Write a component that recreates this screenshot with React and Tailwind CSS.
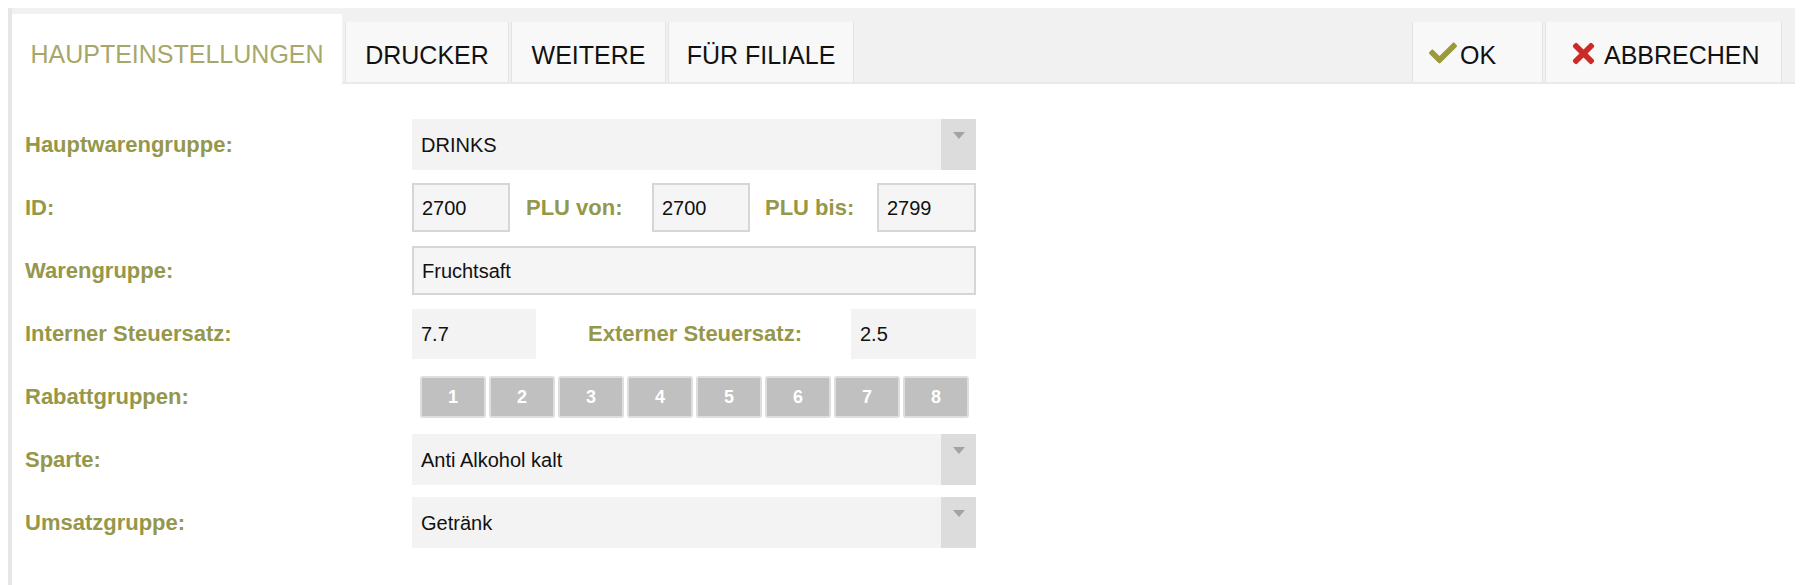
import React from "react";
import { FaCheck, FaTimes } from "react-icons/fa";

const label = "text-[22px] font-bold text-[#95974a] leading-none";
const val = "text-[20px] text-[#111] leading-none";

function Select({ value }) {
  return (
    <div className="flex h-[51px] w-[564px] bg-[#f3f3f3]">
      <div className={`flex flex-1 items-center pl-[9px] ${val}`}>{value}</div>
      <div className="flex w-[35px] justify-center bg-[#dcdcdc] pt-[13px]">
        <div className="h-0 w-0 border-x-[6px] border-t-[7px] border-x-transparent border-t-[#a3a3a3]" />
      </div>
    </div>
  );
}

function Box({ value, w }) {
  return (
    <div
      className={`flex h-[49px] items-center border-2 border-[#d6d6d6] bg-[#f5f5f5] pl-[8px] ${val}`}
      style={{ width: w }}
    >
      {value}
    </div>
  );
}

function Row({ name, children }) {
  return (
    <div className="flex h-[51px] items-center">
      <div className={`w-[387px] ${label}`}>{name}</div>
      {children}
    </div>
  );
}

const tab =
  "flex h-[60px] items-center border-x border-[#e3e3e3] bg-[#f8f8f8] pt-[6px] text-[25px] text-[#111] leading-none";

export default function App() {
  return (
    <div className="h-[585px] w-[1800px] overflow-hidden bg-white pl-[8px] pt-[8px] font-['Liberation_Sans',Arial,sans-serif]">
      <div className="h-full w-[1787px] border-l-4 border-[#e6e6e6]">
        {/* tab bar */}
        <div className="flex h-[76px] items-end border-b-2 border-[#e9e9e9] bg-[#f1f1f1]">
          <div className="-mb-[2px] flex h-[70px] w-[330px] items-center justify-center bg-white pt-[10px] text-[25px] text-[#a7a76a] leading-none">
            HAUPTEINSTELLUNGEN
          </div>
          <div className={`ml-[3px] w-[164px] justify-center ${tab}`}>DRUCKER</div>
          <div className={`ml-[2px] w-[155px] justify-center ${tab}`}>WEITERE</div>
          <div className={`ml-[2px] w-[186px] justify-center ${tab}`}>FÜR FILIALE</div>
          <div className="flex-1" />
          <div className={`w-[131px] gap-[3px] pl-[16px] ${tab}`}>
            <FaCheck className="-mt-[4px] text-[28px] text-[#9a9a3a]" />
            OK
          </div>
          <div className={`ml-[2px] w-[237px] gap-[5px] pl-[22px] ${tab}`}>
            <FaTimes className="-mt-[3px] text-[31px] text-[#cc2a26]" />
            ABBRECHEN
          </div>
          <div className="w-[13px]" />
        </div>

        {/* form */}
        <div className="flex flex-col gap-[12px] pl-[13px] pt-[35px]">
          <Row name="Hauptwarengruppe:">
            <Select value="DRINKS" />
          </Row>
          <Row name="ID:">
            <Box value="2700" w={98} />
            <div className={`w-[142px] pl-[16px] ${label}`}>PLU von:</div>
            <Box value="2700" w={98} />
            <div className={`w-[127px] pl-[15px] ${label}`}>PLU bis:</div>
            <Box value="2799" w={99} />
          </Row>
          <Row name="Warengruppe:">
            <Box value="Fruchtsaft" w={564} />
          </Row>
          <Row name="Interner Steuersatz:">
            <div className={`flex h-[50px] w-[124px] items-center bg-[#f3f3f3] pl-[9px] ${val}`}>7.7</div>
            <div className={`w-[315px] pl-[52px] ${label}`}>Externer Steuersatz:</div>
            <div className={`flex h-[50px] w-[125px] items-center bg-[#f3f3f3] pl-[9px] ${val}`}>2.5</div>
          </Row>
          <Row name="Rabattgruppen:">
            <div className="ml-[8px] flex gap-[3px]">
              {["1", "2", "3", "4", "5", "6", "7", "8"].map((n) => (
                <div
                  key={n}
                  className="flex h-[42px] w-[66px] items-center justify-center rounded-[3px] border-2 border-[#dedede] bg-[#c0c0c0] text-[18px] font-bold text-white leading-none"
                >
                  {n}
                </div>
              ))}
            </div>
          </Row>
          <Row name="Sparte:">
            <Select value="Anti Alkohol kalt" />
          </Row>
          <Row name="Umsatzgruppe:">
            <Select value="Getränk" />
          </Row>
        </div>
      </div>
    </div>
  );
}
